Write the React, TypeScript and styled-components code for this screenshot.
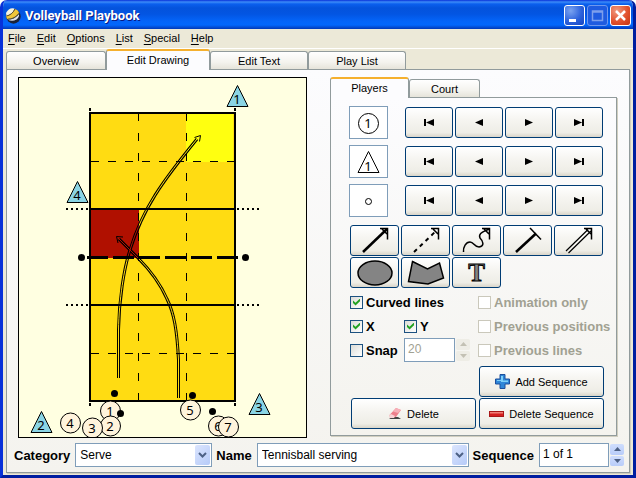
import React from "react";
import styled, { createGlobalStyle, css } from "styled-components";

const GlobalStyle = createGlobalStyle`
  *, *::before, *::after { box-sizing: border-box; }
  body { margin: 0; background: #fff; }
  body, button, input, select { font-family: "Liberation Sans", Arial, sans-serif; font-size: 11px; color: #000; }
  button { cursor: default; }
  svg { display: block; }
`;

/* ---------- window frame ---------- */

const Window = styled.div`
  display: flex;
  flex-direction: column;
  min-width: 636px;
  min-height: 100vh;
  border: solid #0831d9;
  border-width: 0 3px 3px;
  border-color: #0831d9 #001ea0 #001ea0 #0831d9;
  border-radius: 7px 7px 0 0;
  background: #ece9d8;
  overflow: hidden;
`;

const TitleBar = styled.header`
  display: flex;
  align-items: center;
  gap: 2px;
  height: 29px;
  margin: 0 -3px;
  padding: 2px 5px 0 5px;
  background: linear-gradient(#0831d9 0, #3c8cf8 2px, #0a5fee 4px, #0453dc 8px, #0355e2 14px, #0464f8 21px, #0267fc 25px, #0450d8 27px, #0038b8 29px);
`;

const Title = styled.h1`
  flex: 1;
  margin: 0 0 0 2px;
  font: bold 13px/20px Roboto, "Open Sans", sans-serif;
  color: #fff;
  text-shadow: 1px 1px #0a1883;
`;

const CaptionButton = styled.button<{ $tone: "blue" | "dim" | "red" }>`
  width: 21px;
  height: 21px;
  padding: 0;
  border: 1px solid #fff;
  border-radius: 3px;
  background: radial-gradient(circle at 30% 25%, #7aa3f0, #2d62dc 55%, #1443c0);
  ${(p) => p.$tone === "dim" && css`border-color: #6f97ee; background: #1f5be0;`}
  ${(p) => p.$tone === "red" && css`background: radial-gradient(circle at 30% 25%, #f09a80, #e2532f 55%, #c53410);`}
`;

const MenuBar = styled.nav`
  display: flex;
  gap: 11px;
  height: 20px;
  padding: 0 5px;
  border-bottom: 1px solid #fff;
`;

const MenuItem = styled.button`
  padding: 0;
  border: 0;
  background: none;
  line-height: 19px;
  u { text-underline-offset: 2px; }
`;

/* ---------- tabs ---------- */

const TabList = styled.div<{ $top: number }>`
  display: flex;
  align-items: flex-end;
  height: ${(p) => p.$top}px;
`;

const MainTabs = styled(TabList)`
  padding-left: 3px;
`;

const Tab = styled.button<{ $width: number; $active?: boolean }>`
  position: relative;
  width: ${(p) => p.$width}px;
  height: 18px;
  padding: 0;
  border: 1px solid #919b9c;
  border-bottom: 0;
  border-radius: 3px 3px 0 0;
  background: linear-gradient(#fff, #f4f3ee 60%, #e6e4da);
  ${(p) => p.$active && css`
    height: 21px;
    margin-bottom: -1px;
    padding-bottom: 2px;
    border-top: 2px solid #f5b02e;
    background: #fcfcfe;
    z-index: 1;
  `}
`;

const Page = styled.main`
  flex: 1;
  margin: 0 3px 2px;
  padding: 7px 12px 5px 11px;
  border: 1px solid #919b9c;
  box-shadow: 1px 1px #d0cebf;
  background: linear-gradient(#fcfcfe, #f4f3ee);
`;

const Workspace = styled.div`
  display: flex;
  gap: 23px;
  height: 361px;
`;

const DrawingArea = styled.section`
  flex: 1;
  border: 1px solid #000;
  background: #ffffe1;
  overflow: hidden;
`;

const Side = styled.aside`
  width: 287px;
  display: flex;
  flex-direction: column;
  padding-bottom: 2px;
`;

const Panel = styled.div`
  flex: 1;
  padding: 8px 12px 5px 18px;
  border: 1px solid #919b9c;
  box-shadow: 1px 1px #d0cebf;
  background: linear-gradient(#fcfcfe, #f4f3ee);
`;

/* ---------- buttons ---------- */

const buttonFace = css`
  padding: 0;
  border: 1px solid #003c74;
  border-radius: 3px;
  background: linear-gradient(#fff, #f6f5f1 40%, #eeede6 85%, #d9d5c9);
`;

const PlayerRow = styled.div`
  display: flex;
  align-items: center;
  gap: 2px;
  height: 33px;
  margin-bottom: 6px;
`;

const PlayerBox = styled.div`
  width: 39px;
  height: 33px;
  margin-right: 15px;
  border: 1px solid #7f9db9;
  background: #fff;
`;

const StepButton = styled.button`
  ${buttonFace}
  display: grid;
  place-items: center;
  width: 48px;
  height: 31px;
`;

const ToolGrid = styled.div`
  display: grid;
  grid-template-columns: repeat(5, 49px);
  gap: 1px 2px;
  margin: 8px 0 2px 1px;
`;

const ToolButton = styled.button`
  ${buttonFace}
  height: 31px;
`;

const Options = styled.div`
  display: grid;
  grid-template-columns: 54px 74px 1fr;
  grid-auto-rows: 24px;
  align-items: center;
  margin: 0 -12px 4px 1px;
`;

const CheckLabel = styled.label<{ $wide?: boolean; $off?: boolean }>`
  display: flex;
  align-items: center;
  gap: 3px;
  grid-column: ${(p) => (p.$wide ? "span 2" : "auto")};
  font-weight: bold;
  font-size: 13px;
  white-space: nowrap;
  color: ${(p) => (p.$off ? "#a1a192" : "#000")};
`;

const CheckBox = styled.input`
  appearance: none;
  display: grid;
  place-items: center;
  flex: none;
  width: 13px;
  height: 13px;
  margin: 0;
  border: 1px solid #1c5180;
  background: linear-gradient(135deg, #dcdcd7, #fff);
  &:checked::before {
    content: "";
    width: 7px;
    height: 7px;
    background: #21a121;
    clip-path: polygon(0 28%, 36% 62%, 100% 0, 100% 40%, 36% 100%, 0 66%);
  }
  &:disabled { border-color: #cac8bb; background: #fff; }
`;

const Actions = styled.div`
  display: grid;
  grid-template-columns: 125px 125px;
  gap: 1px 3px;
  margin-left: 2px;
`;

const ActionButton = styled.button<{ $second?: boolean }>`
  ${buttonFace}
  display: flex;
  align-items: center;
  justify-content: center;
  gap: 5px;
  height: 31px;
  grid-column: ${(p) => (p.$second ? 2 : 1)};
`;

/* ---------- fields ---------- */

const FieldBar = styled.div`
  display: flex;
  align-items: center;
  gap: 4px;
  margin: 5px -7px 0 -4px;
`;

const FieldLabel = styled.label`
  font-weight: bold;
  font-size: 13px;
  margin-right: 1px;
`;

const SelectWrap = styled.div<{ $width: number; $grow?: boolean }>`
  display: flex;
  flex: ${(p) => (p.$grow ? 1 : "none")};
  width: ${(p) => p.$width}px;
  height: 24px;
  padding: 1px;
  border: 1px solid #7f9db9;
  background: #fff;
`;

const Select = styled.select`
  appearance: none;
  flex: 1;
  min-width: 0;
  padding: 0 3px;
  border: 0;
  background: none;
  font-size: 12px;
`;

const ArrowBox = styled.span`
  display: grid;
  place-items: center;
  width: 15px;
  border-radius: 2px;
  background: linear-gradient(135deg, #dbe5fe, #b6cbf8);
  pointer-events: none;
`;

const SpinWrap = styled.div`
  display: flex;
  height: 24px;
`;

const SpinInput = styled.input<{ $width: number }>`
  width: ${(p) => p.$width}px;
  padding: 0 3px 2px;
  border: 1px solid #7f9db9;
  background: #fff;
  font-size: 12px;
  &:disabled { color: #a1a192; }
`;

const SpinButtons = styled.div`
  display: flex;
  flex-direction: column;
  gap: 1px;
  width: 15px;
  padding: 1px 0 1px 1px;
`;

const SpinButton = styled.button`
  display: grid;
  place-items: center;
  flex: 1;
  padding: 0;
  border: 0;
  border-radius: 2px;
  background: linear-gradient(#cfddfd, #b9cdf9);
  color: #4d6185;
  &:disabled { background: #eeede6; color: #c3c1b4; }
`;

/* ---------- icons ---------- */

const BallLogo = () => (
  <svg width="16" height="16" viewBox="0 0 16 16">
    <circle cx="8.500" cy="8.500" r="7.200" fill="#1b2338" />
    <path d="M1 5Q4 -1 9.500 .5Q8.500 5.500 1.500 8Z" fill="#f7f3e0" />
    <path d="M1 8Q7 7 10 1Q13.500 2 14 5Q9 11.500 2 11Z" fill="#f2c63a" />
    <path d="M2.500 11.500Q10 11.500 14 6Q14.500 9 11.500 11.500Q7 14 2.500 11.500Z" fill="#dfe2ea" />
    <path d="M1.500 8Q7 7 10 1M2.500 11.200Q9.500 11.200 14 5.500" fill="none" stroke="#5c5234" />
  </svg>
);

const stepPaths = {
  first: "M0 0H2V7H0ZM10 0V7L2 3.500Z",
  previous: "M9 0V7L1 3.500Z",
  next: "M1 0V7L9 3.500Z",
  last: "M8 0H10V7H8ZM0 0V7L8 3.500Z",
};

const Chevron = () => (
  <svg width="9" height="7" viewBox="0 0 9 7">
    <path d="M1 1L4.500 4.500L8 1" fill="none" stroke="#4d6185" strokeWidth="2" />
  </svg>
);

const SpinArrow = ({ up }: { up?: boolean }) => (
  <svg width="7" height="4" viewBox="0 0 7 4">
    <path d={up ? "M0 4L3.500 0L7 4Z" : "M0 0L3.500 4L7 0Z"} fill="currentColor" />
  </svg>
);

const head = <path d="M30 3.500H37.500V14.500M32 4L37 9" fill="none" stroke="#000" strokeWidth="1.500" />;

const tools: { name: string; art: React.ReactNode }[] = [
  { name: "Arrow", art: <><path d="M13 27L37 4" stroke="#000" strokeWidth="2.5" />{head}</> },
  { name: "Dashed arrow", art: <><path d="M13 27L36 5" stroke="#000" strokeWidth="2" strokeDasharray="4 4" />{head}</> },
  {
    name: "Curved arrow",
    art: <><path d="M11.500 27C11 22 14 17 18 17C22 17 22 22 27 22C33 21 31 16 28 13C26 8 31 7 37 4" fill="none" stroke="#000" strokeWidth="1.5" />{head}</>,
  },
  { name: "Stop line", art: <><path d="M13 27L33 8.500" stroke="#000" strokeWidth="2.5" /><path d="M27 3L38 14.500" stroke="#000" strokeWidth="1.5" /></> },
  { name: "Double arrow", art: <><path d="M12 26L34 4.500M14.500 28L37 6" stroke="#000" strokeWidth="1.200" />{head}</> },
  { name: "Ellipse", art: <ellipse cx="25" cy="16" rx="17" ry="12" fill="#848484" stroke="#000" strokeWidth="1.5" /> },
  { name: "Polygon", art: <path d="M11.500 4.500L26.500 12L38.500 6L42.500 21L27 27L7.500 24.500Z" fill="#848484" stroke="#000" strokeWidth="1.5" /> },
  {
    name: "Text",
    art: <text x="24.5" y="24" textAnchor="middle" fontFamily="Liberation Serif, serif" fontWeight="bold" fontSize="25" fill="#848484" stroke="#000" strokeWidth="0.9">T</text>,
  },
];

const PlusIcon = () => (
  <svg width="15" height="15" viewBox="0 0 15 15">
    <path d="M5 .5H10V5H14.500V10H10V14.500H5V10H.5V5H5Z" fill="#2f86d8" stroke="#1d4f9c" />
    <path d="M6 2H8V6.500H13V8H6V7H2V6H6Z" fill="#7fd0f8" />
  </svg>
);

const MinusIcon = () => (
  <svg width="15" height="6" viewBox="0 0 15 6">
    <rect x=".5" y=".5" width="14" height="5" fill="#d42020" stroke="#a81818" />
    <rect x="1" y="1" width="13" height="1.500" fill="#f08078" />
  </svg>
);

const EraserIcon = () => (
  <svg width="14" height="13" viewBox="0 0 14 13">
    <path d="M1 12H13L10 10H4Z" fill="#444" />
    <path d="M8 1L13 3L8 10L2 11L1.500 8Z" fill="#ee7f8c" />
    <path d="M8 1L13 3L10 6L5 4.500Z" fill="#f7b0b8" />
    <path d="M1.500 8L3 7L7 9L6 11L2 11Z" fill="#f9d3d6" />
  </svg>
);

/* ---------- court ---------- */

const CourtSvg = styled.svg`
  width: 100%;
  height: 100%;
  font-family: "Noto Sans", sans-serif;
  font-size: 13px;
  text-anchor: middle;
`;

const triangles = [[237, 85, 1], [77, 181, 4], [41, 411, 2], [259, 393, 3]];
const circles = [[70, 423, 4], [110, 411, 1], [110, 426, 2], [92, 428, 3], [190, 410, 5], [218, 426, 6], [228, 427, 7]];
const balls = [[114, 393], [120, 413], [192, 395], [212, 411], [81, 257], [245, 257]];
const serveCurve = "M118.500 378V330C119 300 124 268 130 250C143 208 162 182 197 139";
const returnCurve = "M178.500 398V360C177 330 174 313 167 299C160 283 149 269 138 258L119 239";

const PlayerMark = ({ x, y, n }: { x: number; y: number; n: number }) => (
  <g>
    <circle cx={x + 0.5} cy={y} r="10" fill="#fff4dc" stroke="#000" />
    <text x={x} y={y + 5}>{n}</text>
  </g>
);

const Court = () => (
  <CourtSvg viewBox="19 78 287 359" aria-label="Court drawing">
    <defs>
      <mask id="hollow" maskUnits="userSpaceOnUse" x="19" y="78" width="287" height="359">
        <rect x="19" y="78" width="287" height="359" fill="#fff" />
        <path d={serveCurve} fill="none" stroke="#000" />
        <path d={returnCurve} fill="none" stroke="#000" />
      </mask>
    </defs>
    <rect x="90" y="113" width="145" height="288" fill="#ffdc12" />
    <rect x="186" y="114" width="47" height="48" fill="#ffff10" />
    <rect x="91" y="210" width="48" height="48" fill="#b01000" />
    <g stroke="#000" fill="none" shapeRendering="crispEdges">
      <path d="M138.500 113V401M186.500 113V401" strokeDasharray="8 12" />
      <path d="M91 161.500H235M91 353.500H235" strokeDasharray="8 9" />
      <rect x="90" y="113" width="145" height="288" strokeWidth="2" />
      <path d="M90 209H235M90 305H235" strokeWidth="2" />
      <path d="M66 209H90M237 209H260M66 305H90M237 305H260" strokeWidth="2" strokeDasharray="2 3" />
      <path d="M90 108V111M235 108V111M90 403V406M235 403V406" strokeWidth="2" />
      <path d="M87 257.500H239" strokeWidth="3" strokeDasharray="21 5" />
    </g>
    <g mask="url(#hollow)" fill="none" stroke="#000" strokeWidth="3">
      <path d={serveCurve} />
      <path d={returnCurve} />
    </g>
    <path d="M194.500 137.500L200.500 135.500L199.500 141.500M123 237L116.500 236.500L118 243" fill="none" stroke="#000" />
    {circles.slice(0, 2).map(([x, y, n]) => <PlayerMark key={n} x={x} y={y} n={n} />)}
    {balls.map(([x, y]) => <circle key={x} cx={x + 0.5} cy={y + 0.5} r="3.500" />)}
    {circles.slice(2).map(([x, y, n]) => <PlayerMark key={n} x={x} y={y} n={n} />)}
    {triangles.map(([x, y, n]) => (
      <g key={n}>
        <path d={`M${x + 0.5} ${y + 0.5}l10.500 21h-21Z`} fill="#8ad4e4" stroke="#000" />
        <text x={x} y={y + 19}>{n}</text>
      </g>
    ))}
  </CourtSvg>
);

const markers = [
  { name: "Team player", art: <><circle cx="18.500" cy="16.500" r="10" fill="none" stroke="#000" /><text x="18" y="21">1</text></> },
  { name: "Opponent", art: <><path d="M18.500 5.500L29 26.500H8Z" fill="none" stroke="#000" /><text x="18" y="25">1</text></> },
  { name: "Ball", art: <circle cx="18.500" cy="16.500" r="3" fill="none" stroke="#000" /> },
];

const menu = ["File", "Edit", "Options", "List", "Special", "Help"];

export default function App() {
  return (
    <>
      <GlobalStyle />
      <Window>
        <TitleBar>
          <BallLogo />
          <Title>Volleyball Playbook</Title>
          <CaptionButton $tone="blue" aria-label="Minimize">
            <svg width="19" height="19"><path d="M4 13H11V16H4Z" fill="#fff" /></svg>
          </CaptionButton>
          <CaptionButton $tone="dim" aria-label="Maximize" disabled>
            <svg width="19" height="19"><path d="M4.500 5H14.500V14.500H4.500ZM4 6H15" fill="none" stroke="#7d9fec" strokeWidth="1.500" /></svg>
          </CaptionButton>
          <CaptionButton $tone="red" aria-label="Close">
            <svg width="19" height="19"><path d="M5 5L14 14M14 5L5 14" stroke="#fff" strokeWidth="2.500" /></svg>
          </CaptionButton>
        </TitleBar>
        <MenuBar>
          {menu.map((m) => <MenuItem key={m}><u>{m[0]}</u>{m.slice(1)}</MenuItem>)}
        </MenuBar>
        <MainTabs role="tablist" $top={20}>
          <Tab role="tab" $width={100}>Overview</Tab>
          <Tab role="tab" aria-selected $active $width={104}>Edit Drawing</Tab>
          <Tab role="tab" $width={98}>Edit Text</Tab>
          <Tab role="tab" $width={98}>Play List</Tab>
        </MainTabs>
        <Page>
          <Workspace>
            <DrawingArea><Court /></DrawingArea>
            <Side>
              <TabList role="tablist" $top={20}>
                <Tab role="tab" aria-selected $active $width={79}>Players</Tab>
                <Tab role="tab" $width={71}>Court</Tab>
              </TabList>
              <Panel>
                {markers.map((marker) => (
                  <PlayerRow key={marker.name}>
                    <PlayerBox>
                      <CourtSvg viewBox="0 0 37 31" aria-label={marker.name}>{marker.art}</CourtSvg>
                    </PlayerBox>
                    {Object.entries(stepPaths).map(([step, d]) => (
                      <StepButton key={step} aria-label={`${marker.name}: ${step}`}>
                        <svg width="10" height="7"><path d={d} /></svg>
                      </StepButton>
                    ))}
                  </PlayerRow>
                ))}
                <ToolGrid>
                  {tools.map((t) => (
                    <ToolButton key={t.name} aria-label={t.name}>
                      <svg width="47" height="29" viewBox="1 1 47 29">{t.art}</svg>
                    </ToolButton>
                  ))}
                </ToolGrid>
                <Options>
                  <CheckLabel $wide><CheckBox type="checkbox" defaultChecked />Curved lines</CheckLabel>
                  <CheckLabel $off><CheckBox type="checkbox" disabled />Animation only</CheckLabel>
                  <CheckLabel><CheckBox type="checkbox" defaultChecked />X</CheckLabel>
                  <CheckLabel><CheckBox type="checkbox" defaultChecked />Y</CheckLabel>
                  <CheckLabel $off><CheckBox type="checkbox" disabled />Previous positions</CheckLabel>
                  <CheckLabel><CheckBox type="checkbox" />Snap</CheckLabel>
                  <SpinWrap>
                    <SpinInput $width={51} disabled defaultValue="20" aria-label="Snap distance" />
                    <SpinButtons>
                      <SpinButton disabled aria-label="Increase"><SpinArrow up /></SpinButton>
                      <SpinButton disabled aria-label="Decrease"><SpinArrow /></SpinButton>
                    </SpinButtons>
                  </SpinWrap>
                  <CheckLabel $off><CheckBox type="checkbox" disabled />Previous lines</CheckLabel>
                </Options>
                <Actions>
                  <ActionButton $second><PlusIcon />Add Sequence</ActionButton>
                  <ActionButton><EraserIcon />Delete</ActionButton>
                  <ActionButton $second><MinusIcon />Delete Sequence</ActionButton>
                </Actions>
              </Panel>
            </Side>
          </Workspace>
          <FieldBar>
            <FieldLabel htmlFor="category">Category</FieldLabel>
            <SelectWrap $width={137}>
              <Select id="category"><option>Serve</option></Select>
              <ArrowBox><Chevron /></ArrowBox>
            </SelectWrap>
            <FieldLabel htmlFor="name">Name</FieldLabel>
            <SelectWrap $width={209} $grow>
              <Select id="name"><option>Tennisball serving</option></Select>
              <ArrowBox><Chevron /></ArrowBox>
            </SelectWrap>
            <FieldLabel htmlFor="sequence">Sequence</FieldLabel>
            <SpinWrap>
              <SpinInput id="sequence" $width={70} defaultValue="1 of 1" />
              <SpinButtons>
                <SpinButton aria-label="Next sequence"><SpinArrow up /></SpinButton>
                <SpinButton aria-label="Previous sequence"><SpinArrow /></SpinButton>
              </SpinButtons>
            </SpinWrap>
          </FieldBar>
        </Page>
      </Window>
    </>
  );
}
